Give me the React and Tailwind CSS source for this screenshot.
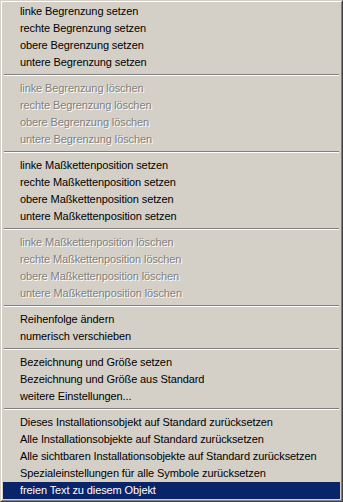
import React from 'react';

const groups = [
  {
    disabled: false,
    items: ['linke Begrenzung setzen', 'rechte Begrenzung setzen', 'obere Begrenzung setzen', 'untere Begrenzung setzen'],
  },
  {
    disabled: true,
    items: ['linke Begrenzung löschen', 'rechte Begrenzung löschen', 'obere Begrenzung löschen', 'untere Begrenzung löschen'],
  },
  {
    disabled: false,
    items: [
      'linke Maßkettenposition setzen',
      'rechte Maßkettenposition setzen',
      'obere Maßkettenposition setzen',
      'untere Maßkettenposition setzen',
    ],
  },
  {
    disabled: true,
    items: [
      'linke Maßkettenposition löschen',
      'rechte Maßkettenposition löschen',
      'obere Maßkettenposition löschen',
      'untere Maßkettenposition löschen',
    ],
  },
  {
    disabled: false,
    items: ['Reihenfolge ändern', 'numerisch verschieben'],
  },
  {
    disabled: false,
    items: ['Bezeichnung und Größe setzen', 'Bezeichnung und Größe aus Standard', 'weitere Einstellungen...'],
  },
  {
    disabled: false,
    items: [
      'Dieses Installationsobjekt auf Standard zurücksetzen',
      'Alle Installationsobjekte auf Standard zurücksetzen',
      'Alle sichtbaren Installationsobjekte auf Standard zurücksetzen',
      'Spezialeinstellungen für alle Symbole zurücksetzen',
      'freien Text zu diesem Objekt',
    ],
  },
];

const MenuItem = ({ label, disabled, active }) => {
  let tone = 'text-black';
  if (disabled) tone = 'text-[#808080] [text-shadow:1px_1px_0_#ffffff]';
  if (active) tone = 'bg-[#0a246a] text-white';
  return (
    <div className={`h-[17px] pl-[17px] flex items-center whitespace-nowrap ${tone}`}>
      {label}
    </div>
  );
};

const Separator = () => (
  <div className="h-[9px] pt-[3px] px-px">
    <div className="h-px bg-[#808080]" />
    <div className="h-px bg-white" />
  </div>
);

export default function App() {
  const last = groups.length - 1;
  return (
    <div className="w-[343px] h-[502px] bg-[#d4d0c8] border border-t-[#d4d0c8] border-l-[#d4d0c8] border-r-[#404040] border-b-[#404040]">
      <div className="h-full border border-t-white border-l-white border-r-[#808080] border-b-[#808080] p-px font-['Liberation_Sans',Arial,sans-serif] text-[11px] tracking-[-0.1px] leading-none">
        {groups.map((group, gi) => (
          <div key={gi}>
            {group.items.map((label, i) => (
              <MenuItem
                key={label}
                label={label}
                disabled={group.disabled}
                active={gi === last && i === group.items.length - 1}
              />
            ))}
            {gi < last && <Separator />}
          </div>
        ))}
      </div>
    </div>
  );
}
